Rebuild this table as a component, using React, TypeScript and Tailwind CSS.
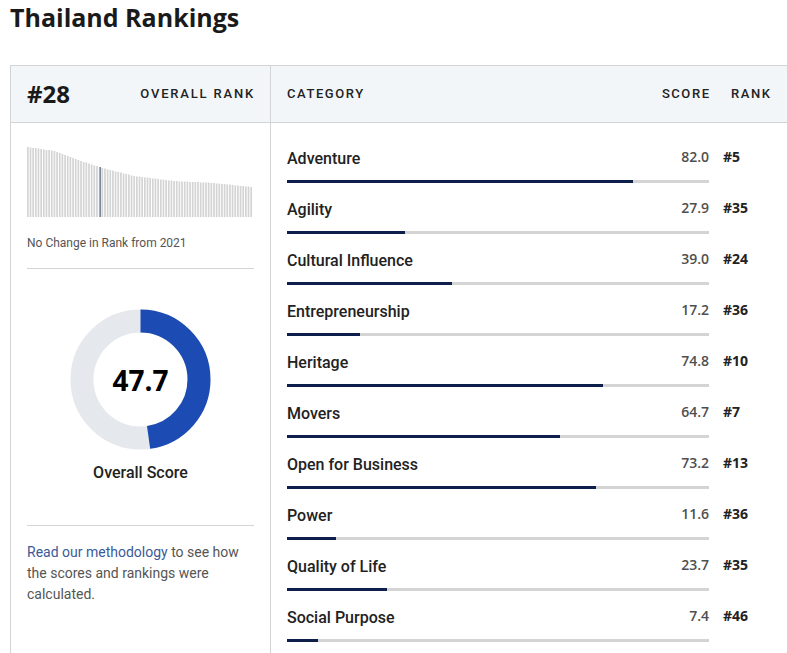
import React from "react";

const categories = [
  { name: "Adventure", score: 82.0, rank: 5 },
  { name: "Agility", score: 27.9, rank: 35 },
  { name: "Cultural Influence", score: 39.0, rank: 24 },
  { name: "Entrepreneurship", score: 17.2, rank: 36 },
  { name: "Heritage", score: 74.8, rank: 10 },
  { name: "Movers", score: 64.7, rank: 7 },
  { name: "Open for Business", score: 73.2, rank: 13 },
  { name: "Power", score: 11.6, rank: 36 },
  { name: "Quality of Life", score: 23.7, rank: 35 },
  { name: "Social Purpose", score: 7.4, rank: 46 },
];

const pts: [number, number][] = [
  [0, 70],
  [10, 66],
  [20, 56],
  [28, 49],
  [40, 41],
  [55, 36],
  [70, 34],
  [84, 30],
];

function heightAt(i: number) {
  for (let k = 0; k < pts.length - 1; k++) {
    const [x0, y0] = pts[k];
    const [x1, y1] = pts[k + 1];
    if (i >= x0 && i <= x1) {
      return y0 + ((y1 - y0) * (i - x0)) / (x1 - x0);
    }
  }
  return 30;
}

function RankChart() {
  const n = 85;
  const pitch = 226 / n;
  const bw = 1.7;
  const bars = [];
  for (let i = 0; i < n; i++) {
    const h = Math.round(heightAt(i) * 2) / 2;
    const x = i * pitch;
    if (i === 27) {
      bars.push(
        <g key={i}>
          <rect x={x} y={70 - h} width={bw} height={h} fill="#d5e3ee" />
          <rect x={x + bw - 0.8} y={70 - h} width={0.9} height={h} fill="#2c3e50" />
        </g>
      );
    } else {
      bars.push(<rect key={i} x={x} y={70 - h} width={bw} height={h} fill="#d4d4d4" />);
    }
  }
  return (
    <svg width={226} height={70} viewBox="0 0 226 70" className="block">
      {bars}
    </svg>
  );
}

function Donut() {
  const r = 58.5;
  const c = 2 * Math.PI * r;
  const v = 0.477 * c;
  return (
    <div className="relative w-[141px] h-[141px]">
      <svg width={141} height={141} viewBox="0 0 141 141" className="block">
        <circle cx={70.5} cy={70.5} r={r} fill="none" stroke="#e5e8ec" strokeWidth={23} />
        <circle
          cx={70.5}
          cy={70.5}
          r={r}
          fill="none"
          stroke="#1c4bb3"
          strokeWidth={23}
          strokeDasharray={`${v} ${c}`}
          transform="rotate(-90 70.5 70.5)"
        />
      </svg>
      <div className="absolute inset-0 flex items-center justify-center font-['Open_Sans',sans-serif] text-[28px] font-bold text-black">
        47.7
      </div>
    </div>
  );
}

export default function App() {
  return (
    <div className="w-[787px] h-[653px] overflow-hidden bg-white pl-[10px] font-['Roboto',sans-serif] text-[#222]">
      <h1 className="h-8 pt-px leading-8 text-[25px] font-bold text-[#1a1a1a] font-['Open_Sans',sans-serif]">
        Thailand Rankings
      </h1>
      <div className="mt-[33px] flex w-[800px] border-l border-t border-[#d4d4d4]">
        {/* Left column */}
        <div className="w-[260px] shrink-0 border-r border-[#d4d4d4] h-[600px]">
          <div className="h-[57px] border-b border-[#d4d4d4] bg-[#f3f6f9] px-4 flex items-center justify-between">
            <span className="font-['Open_Sans',sans-serif] text-[24px] font-bold text-[#1a1a1a] leading-none">
              #28
            </span>
            <span className="text-[13px] font-medium tracking-[0.14em] text-[#222] -mr-px">OVERALL RANK</span>
          </div>
          <div className="px-4">
            <div className="pt-6 pb-[17px] border-b border-[#d4d4d4]">
              <RankChart />
              <div className="mt-[18px] text-[12px] leading-4 text-[#555]">No Change in Rank from 2021</div>
            </div>
            <div className="pt-10 pb-[40px] border-b border-[#d4d4d4] flex flex-col items-center">
              <Donut />
              <div className="mt-[11px] text-[16px] leading-6 font-medium text-[#222]">Overall Score</div>
            </div>
            <p className="pt-4 text-[14px] leading-[21px] text-[#555]">
              <span className="text-[#3b5a98]">Read our methodology</span> to see how the scores and rankings
              were calculated.
            </p>
          </div>
        </div>
        {/* Right column */}
        <div className="flex-1">
          <div className="h-[57px] border-b border-[#d4d4d4] bg-[#f3f6f9] pl-4 flex items-center">
            <div className="w-[422px] flex justify-between text-[13px] font-medium tracking-[0.12em] text-[#222] -mt-px">
              <span>CATEGORY</span>
              <span className="-mr-[0.12em]">SCORE</span>
            </div>
            <div className="pl-[22px] text-[13px] font-medium tracking-[0.12em] text-[#222] -mt-px">RANK</div>
          </div>
          <div className="pl-4 pt-6">
            {categories.map((c) => (
              <div key={c.name} className="flex h-[51px]">
                <div className="w-[422px] shrink-0">
                  <div className="flex justify-between items-start">
                    <span className="text-[16px] leading-6 font-medium text-[#222]">{c.name}</span>
                    <span className="font-['Open_Sans',sans-serif] text-[14px] leading-5 font-semibold text-[#4f4f4f]">
                      {c.score.toFixed(1)}
                    </span>
                  </div>
                  <div className="mt-[9px] h-[3px] bg-[#d4d4d4]">
                    <div className="h-full bg-[#0f1f4b]" style={{ width: `${c.score}%` }} />
                  </div>
                </div>
                <div className="pl-[14px] font-['Open_Sans',sans-serif] text-[14px] leading-5 font-bold text-[#222]">
                  #{c.rank}
                </div>
              </div>
            ))}
          </div>
        </div>
      </div>
    </div>
  );
}
